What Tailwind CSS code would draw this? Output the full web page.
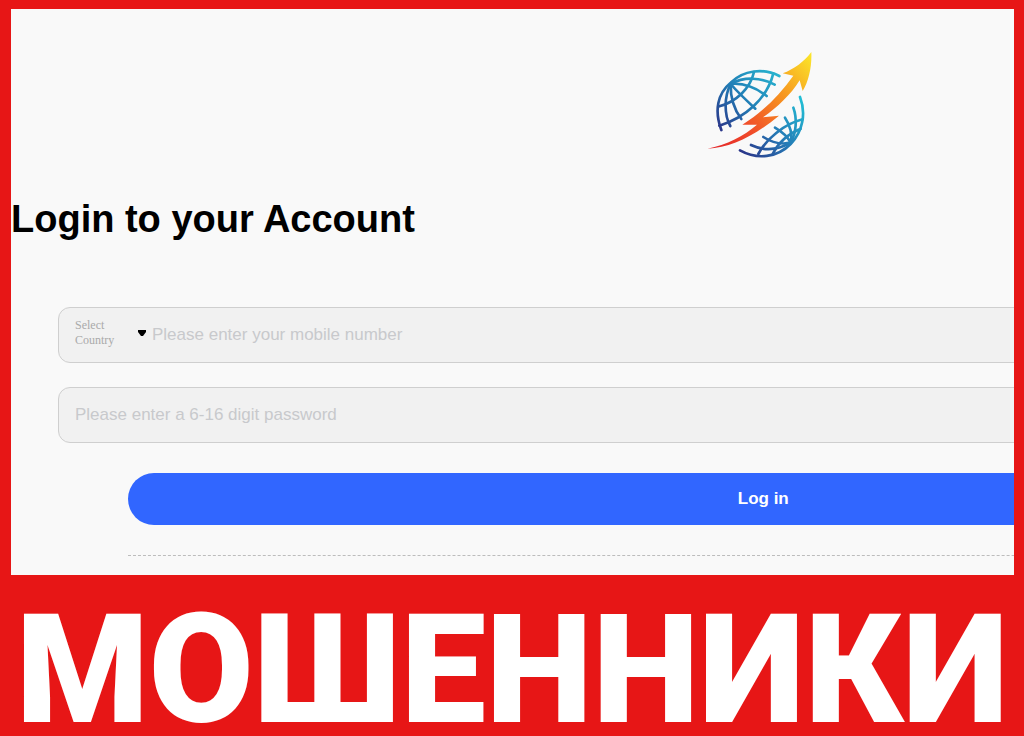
<!DOCTYPE html>
<html lang="en">
<head>
    <meta charset="UTF-8">
    <meta name="viewport" content="width=device-width, initial-scale=1.0">
    <title>Login to your Account</title>
    <script src="https://cdn.jsdelivr.net/npm/@tailwindcss/browser@4"></script>
</head>
<body class="bg-[#e71616] font-['Liberation_Sans',Arial,sans-serif]">

    <!-- Login page, runs past the right edge of the frame -->
    <main class="mt-[9px] ml-[11px] mr-[10px] overflow-hidden bg-[#f9f9f9]">
        <div class="w-[150%] pt-[31px] pb-[19px]">

            <!-- Logo -->
            <svg class="mx-auto block w-[140px] h-[130px]" viewBox="9 0 420 390" fill="none" role="img" aria-label="Globe with arrow">
                <defs>
                    <linearGradient id="globeTop" gradientUnits="userSpaceOnUse" x1="85" y1="270" x2="265" y2="100">
                        <stop offset="0" stop-color="#2b3488"/>
                        <stop offset="0.5" stop-color="#2180b7"/>
                        <stop offset="1" stop-color="#28b4cf"/>
                    </linearGradient>
                    <linearGradient id="globeBottom" gradientUnits="userSpaceOnUse" x1="150" y1="340" x2="335" y2="180">
                        <stop offset="0" stop-color="#2b3488"/>
                        <stop offset="0.5" stop-color="#2579b5"/>
                        <stop offset="1" stop-color="#22bdd4"/>
                    </linearGradient>
                    <linearGradient id="arrow" gradientUnits="userSpaceOnUse" x1="60" y1="325" x2="365" y2="50">
                        <stop offset="0" stop-color="#e32429"/>
                        <stop offset="0.3" stop-color="#f04b2a"/>
                        <stop offset="0.65" stop-color="#f7941f"/>
                        <stop offset="1" stop-color="#fbe42a"/>
                    </linearGradient>
                </defs>
                <g stroke="url(#globeTop)" stroke-width="8" stroke-linecap="round">
                    <path d="M94 270C72 211 83 160 122 128C160 90 221 83 268 108"/>
                    <path d="M122 132C102 170 102 225 121 258"/>
                    <path d="M122 132C121 170 131 207 154 237"/>
                    <path d="M122 132C140 153 169 181 196 206"/>
                    <path d="M122 132C160 128 198 143 230 168"/>
                    <path d="M122 132C163 109 213 112 254 134"/>
                    <path d="M88 199C137 185 180 148 192 96"/>
                    <path d="M88 257C166 233 231 176 250 100"/>
                </g>
                <g stroke="url(#globeBottom)" stroke-width="8" stroke-linecap="round">
                    <path d="M330 171C349 220 338 275 302 312C262 353 202 360 150 331"/>
                    <path d="M302 308C319 278 322 236 310 203"/>
                    <path d="M302 308C308 286 301 256 285 233"/>
                    <path d="M302 308C295 294 277 276 255 263"/>
                    <path d="M302 308C276 314 245 307 220 291"/>
                    <path d="M302 308C262 331 219 332 183 315"/>
                    <path d="M205 342C229 297 280 253 338 238"/>
                    <path d="M248 342C264 309 296 281 332 266"/>
                </g>
                <path fill="url(#arrow)" d="M364 36C366 80 356 124 338 153L329 121C303 164 262 202 219 232L267 227C194 287 124 324 52 326C110 314 162 288 201 254L157 254C213 220 267 168 310 107L278 100C312 88 343 64 364 36Z"/>
            </svg>

            <h1 class="mt-7 text-[38px] leading-[42px] font-bold text-black">Login to your Account</h1>

            <form class="mt-[67px]">
                <div class="mx-[47px] space-y-6">
                    <!-- Phone field with country picker -->
                    <div class="flex h-14 items-center rounded-xl border border-[#cfcfcf] bg-[#f1f1f1] pl-4">
                        <label class="relative flex w-[77px] items-center justify-between pb-1 pr-[6px]">
                            <span class="w-12 font-['Liberation_Serif',serif] text-xs leading-[15px] text-[#aaaaaa]">Select Country</span>
                            <svg class="h-[6px] w-2" viewBox="0 0 8 6"><path fill="#000" d="M0 0H8V2L5 6H3L0 2Z"/></svg>
                            <select class="absolute inset-0 w-full appearance-none opacity-0" aria-label="Select Country">
                                <option></option>
                            </select>
                        </label>
                        <input type="tel" aria-label="Mobile number" placeholder="Please enter your mobile number" class="h-full flex-1 bg-transparent text-[17px] leading-5 outline-none placeholder:text-[#c8c9cc]">
                    </div>
                    <!-- Password field -->
                    <div class="flex h-14 items-center rounded-xl border border-[#cfcfcf] bg-[#f1f1f1] pl-4">
                        <input type="password" aria-label="Password" placeholder="Please enter a 6-16 digit password" class="h-full flex-1 bg-transparent text-[17px] leading-5 outline-none placeholder:text-[#c8c9cc]">
                    </div>
                </div>

                <div class="mx-[117px] mt-[30px] border-b border-dashed border-[#bdbdbd] pb-[30px]">
                    <button type="submit" class="block h-[52px] w-full rounded-full bg-[#3166ff] text-[17px] leading-5 font-bold text-white">Log in</button>
                </div>
            </form>
        </div>
    </main>

    <!-- Warning banner -->
    <footer class="mt-[29px] overflow-hidden text-center">
        <p class="font-[Roboto,sans-serif] text-[152px] leading-[132px] font-black whitespace-nowrap text-white">МОШЕННИКИ</p>
    </footer>

</body>
</html>
